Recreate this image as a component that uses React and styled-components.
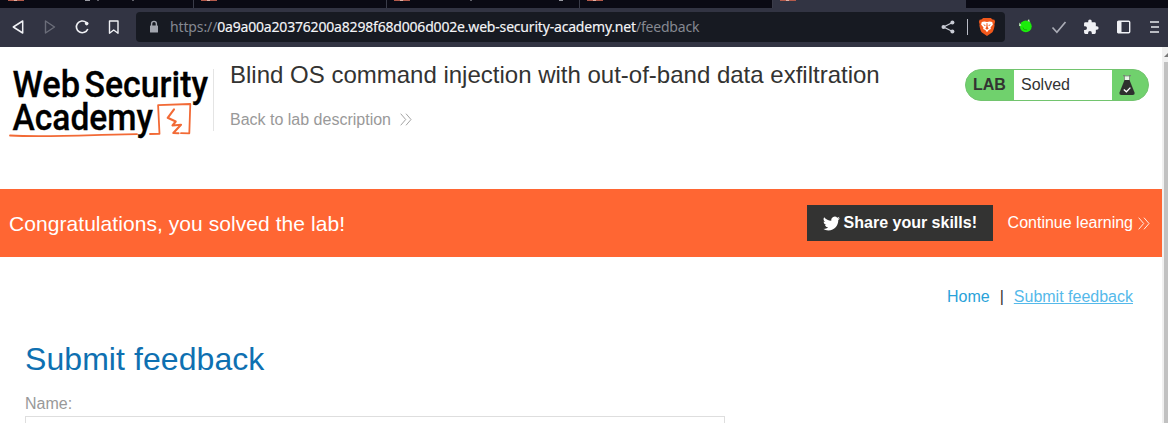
import React from "react";
import styled, { createGlobalStyle } from "styled-components";

const Global = createGlobalStyle`
  * { box-sizing: border-box; }
  body { margin: 0; background: #fff; overflow: hidden; font-family: "Liberation Sans", Arial, sans-serif; }
  a { color: inherit; text-decoration: none; }
`;
const Window = styled.div`width: 1168px; height: 423px; overflow: hidden; display: flex; flex-direction: column;`;
const TabStrip = styled.div`height: 8px; display: flex; padding-left: 1px; background: #0a0a14; flex: none;`;
const Tab = styled.div`
  width: 193px; height: 8px; overflow: hidden;
  background: ${(p) => (p.$active ? "#323443" : "#0a0a14")};
  border-right: 1px solid ${(p) => (p.$active ? "#323443" : "#3a3c49")};
  svg { display: block; }
`;
const Toolbar = styled.div`height: 39px; flex: none; background: #323443; display: flex; align-items: center; padding: 0 5px 1px 11px;`;
const NavButtons = styled.div`display: flex; gap: 14px; width: 125px; svg { display: block; flex: none; }`;
const AddressBar = styled.div`
  width: 869px; height: 30px; border-radius: 4px; background: #171a22; flex: none;
  display: flex; align-items: center; padding: 0 9px 0 12px;
  svg { display: block; flex: none; }
`;
const Url = styled.div`flex: 1; margin-left: 10px; font: 14px/20px "Noto Sans", sans-serif; white-space: nowrap; display: flex;`;
const Part = styled.span`
  letter-spacing: ${(p) => p.$space}px;
  color: ${(p) => (p.$strong ? "#f4f5f8" : "#858891")};
  -webkit-text-stroke: ${(p) => (p.$strong ? "0.15px #f4f5f8" : "0")};
`;
const Divider = styled.i`width: 1px; height: 16px; background: #b9bcc6; margin: 0 10px 0 12px;`;
const Extensions = styled.div`display: flex; flex: 1; gap: 14.500px; align-items: center; padding-left: 12px; svg { display: block; flex: none; }`;
const Viewport = styled.div`display: flex; flex: 1; min-height: 0;`;
const Page = styled.main`width: 1162px; flex: none; overflow: hidden;`;
const Scrollbar = styled.div`width: 6px; background: #f0f0f0; padding: 15px 0 0 2px; position: relative; svg { position: absolute; top: 5px; left: 2px; }`;
const Thumb = styled.div`height: 100%; background: #c1c1c1;`;
const Header = styled.header`height: 142px; display: flex; padding: 12px 13px 0 8px; align-items: flex-start; svg { display: block; }`;
const Logo = styled.svg`flex: none; width: 205px; height: 84px; overflow: visible;`;
const TitleBlock = styled.div`border-left: 1px solid #e4e4e4; height: 62px; margin: 10px 0 0; padding-left: 16px; flex: 1;`;
const Title = styled.h2`margin: -10px 0 0; font-weight: 400; font-size: 24px; line-height: 32px; color: #333332; white-space: nowrap;`;
const Back = styled.a`display: flex; align-items: center; gap: 9px; margin-top: 19px; font-size: 16px; line-height: 20px; color: #999; svg { margin-top: -2px; }`;
const Status = styled.div`
  width: 184px; height: 32px; margin-top: 10px; border-radius: 16px; border: 1px solid #72c46e; background: #70d16d;
  display: flex; align-items: center; color: #333332; font-size: 16px;
`;
const LabName = styled.b`width: 48px; padding-left: 7px;`;
const LabState = styled.span`width: 98px; height: 30px; line-height: 30px; padding-left: 7px; background: #fff;`;
const Flask = styled.svg`margin-left: 7px;`;
const Banner = styled.section`height: 68px; background: #ff6633; color: #fff; display: flex; align-items: center; padding: 0 12px 0 9px;`;
const Message = styled.p`flex: 1; margin: 0; font-size: 21px; letter-spacing: 0.06px; line-height: 28px; padding-top: 2px;`;
const Share = styled.button`
  width: 186px; height: 36px; border: 0; padding: 0 0 0 16px; background: #333332; color: #fff;
  font: bold 16px "Liberation Sans", Arial, sans-serif; display: flex; align-items: center; gap: 4px; white-space: nowrap;
`;
const Continue = styled.a`display: flex; align-items: center; gap: 5px; margin-left: 15px; font-size: 16px; white-space: nowrap;`;
const Links = styled.nav`display: flex; justify-content: flex-end; gap: 10px; padding: 30px 29px 0 0; height: 83px; font-size: 16px; line-height: 20px; color: #333332;`;
const Link = styled.a`&& { color: ${(p) => (p.$current ? "#55b9ea" : "#29a2d9")}; text-decoration: ${(p) => (p.$current ? "underline" : "none")}; }`;
const Form = styled.form`padding-left: 25px;`;
const FormTitle = styled.h1`margin: 0; color: #0e70b1; font-weight: 400; font-size: 32px; letter-spacing: 0.07px; line-height: 38px;`;
const Label = styled.label`display: block; margin-top: 16px; font-size: 16px; line-height: 20px; color: #999;`;
const Field = styled.input`display: block; width: 700px; height: 32px; margin-top: 2px; border: 1px solid #dedede; background: #fff; outline: none;`;

const Chevrons = ({ color }) => (
  <svg width="12" height="13" viewBox="0 0 12 13" fill="none" stroke={color} strokeWidth="1"><path d="M.7.7l5 5.8-5 5.8M6 .7l5 5.8-5 5.8" /></svg>
);
const TabBottom = ({ marks }) => (
  <svg width="192" height="8">
    <path d="M7 0h16v1H7z" fill="#b45a4b" />
    <path d="M13 0h3v1h-3z" fill="#e0b0a4" />
    <path d={marks} fill="none" stroke="#9a9ba3" strokeWidth="1.2" />
  </svg>
);

const tabs = ["M84 .4h5M97 0v1M132 0v1", "", "M84 0v1M172 .4h4", "", null];

export default function App() {
  return (
    <Window>
      <Global />
      <TabStrip>{tabs.map((m, i) => <Tab key={i} $active={m === null}><TabBottom marks={m || ""} /></Tab>)}</TabStrip>
      <Toolbar>
        <NavButtons>
          <svg width="16" height="18" fill="none" stroke="#f0f1f5" strokeWidth="1.5" strokeLinejoin="round"><path d="M11.7 3v12L2.3 9z" /></svg>
          <svg width="20" height="18" fill="none" stroke="#6b6d79" strokeWidth="1.4" strokeLinejoin="round"><path d="M4.5 3v12l9-6z" /></svg>
          <svg width="16" height="18" fill="none" stroke="#f0f1f5" strokeWidth="1.6"><path d="M11.2 4.4A5.9 5.9 0 1 0 12.8 11" /><circle cx="11.7" cy="5.6" r="1.8" fill="#f0f1f5" stroke="none" /></svg>
          <svg width="16" height="18" fill="none" stroke="#f0f1f5" strokeWidth="1.4" strokeLinejoin="round"><path d="M4.5 3H13v12.2L8.7 12l-4.2 3.2z" /></svg>
        </NavButtons>
        <AddressBar>
          <svg width="12" height="14" fill="none" stroke="#a2a5ae" strokeWidth="1.4"><path d="M3.6 6V3.8a2.4 2.4 0 0 1 4.8 0V6" /><rect x="2" y="5.5" width="8" height="7" rx=".6" fill="#a2a5ae" stroke="none" /></svg>
          <Url><Part $space={-0.13}>https://</Part><Part $strong $space={-0.187}>0a9a00a20376200a8298f68d006d002e.web-security-academy.net</Part><Part $space={-0.2}>/feedback</Part></Url>
          <svg width="14" height="14" stroke="#c9ccd5" strokeWidth="1.3" fill="none"><path d="M11.5 2.5L2.6 7l8.9 4.5" /><g fill="#c9ccd5" stroke="none"><circle cx="11.4" cy="2.5" r="2" /><circle cx="2.5" cy="7" r="2" /><circle cx="11.4" cy="11.6" r="2" /></g></svg>
          <Divider />
          <svg width="18" height="18" viewBox="0 0 18 18"><path d="M5.2 0h7.6l1.8 1.5 1.8.2.7 2-.7 2.5.2 1.3c-.6 3-1.2 5.5-2.2 6.7L9 18l-5.4-3.8C2.6 13 2 10.5 1.4 7.5l.2-1.3L.9 3.7l.7-2 1.8-.2z" fill="#f1581b" /><path d="M3.8 4l2.5-.6 2.7.5 2.7-.5 2.5.6.7 2.5-2.4 3 .4 1.6-2.2 1-1.7 2.2-1.7-2.200-2.200-1 .4-1.600-2.400-3z" fill="#fff" /><path d="M5 6.3l2.6.8-.5 1.2zM13 6.3l-2.600.8.5 1.2zM8.600 5h.8l.3 4 1 1.5L9 11.7l-1.700-1.200 1-1.500z" fill="#f1581b" /></svg>
        </AddressBar>
        <Extensions>
          <svg width="18" height="18"><circle cx="8.8" cy="8.3" r="5.9" fill="#1bed0b" /><path d="M2.5 4.5L2 8l2.4-.5zM10.5 3l1.5-2 .8 3z" fill="#c5f6bd" /><path d="M6 9.5l1 2 3 .4" fill="none" stroke="#13b80a" /></svg>
          <svg width="18" height="18" fill="none" stroke="#aaacb6" strokeWidth="1.7"><path d="M2.5 9.5l4.4 4.8L15.5 4" /></svg>
          <svg width="18" height="18" viewBox="-1 0 26 24" fill="#f0f1f5"><path d="M20.5 11H19V7a2 2 0 0 0-2-2h-4V3.5a2.5 2.5 0 0 0-5 0V5H4a2 2 0 0 0-2 2v3.8h1.5a2.7 2.7 0 0 1 0 5.4H2V20a2 2 0 0 0 2 2h3.8v-1.5a2.7 2.7 0 0 1 5.4 0V22H17a2 2 0 0 0 2-2v-4h1.5a2.5 2.5 0 0 0 0-5z" /></svg>
          <svg width="18" height="18"><rect x="2.7" y="3.2" width="12" height="11.5" rx="1" fill="none" stroke="#f0f1f5" strokeWidth="1.4" /><path d="M2.5 3h4v12h-4z" fill="#f0f1f5" /></svg>
          <svg width="14" height="18" stroke="#e6e7ed" strokeWidth="1.5"><path d="M3 4h9M4 9h8M3 14h9" /></svg>
        </Extensions>
      </Toolbar>
      <Viewport>
        <Page>
          <Header>
            <Logo viewBox="8 59 205 84">
              <g fill="#000" stroke="#000" strokeWidth=".3" fontFamily="Roboto, sans-serif" fontWeight="500" fontSize="37">
                <text x="12.5" y="97.3" textLength="67.5" lengthAdjust="spacingAndGlyphs">Web</text>
                <text x="84.500" y="97.3" textLength="123.5" lengthAdjust="spacingAndGlyphs">Security</text>
                <text x="12.5" y="130" textLength="140.5" lengthAdjust="spacingAndGlyphs">Academy</text>
              </g>
              <g fill="none" stroke="#f26a36" strokeLinejoin="round" strokeLinecap="round">
                <path d="M10 135.5c38 2 88-1 127-1.3M150 134l9.5-.2-1.4-28.6 32.2-1.2-1 29.3-8.3-.1" strokeWidth="1.8" />
                <path d="M174 109.3l-6.3 8.5 8 3.7-3.2 4 8.5-.8-7.7 8.3 5.2.2" strokeWidth="2.1" />
              </g>
            </Logo>
            <TitleBlock>
              <Title>Blind OS command injection with out-of-band data exfiltration</Title>
              <Back>Back to lab description <Chevrons color="#a3a3a3" /></Back>
            </TitleBlock>
            <Status>
              <LabName>LAB</LabName><LabState>Solved</LabState>
              <Flask width="16" height="22"><path d="M5.5 2h5v5h-5z" fill="#e9f7e8" stroke="#777" strokeWidth=".7" /><path d="M4 1.7h2M10 1.7h2" stroke="#777" /><path d="M5.5 6h5l5 12.5q.5 2.5-2 2.5h-11q-2.5 0-2-2.5z" fill="#2e302e" /><path d="M4.8 15.5l2.6 2.3 4-4.2" fill="none" stroke="#fff" strokeWidth="1.3" /></Flask>
            </Status>
          </Header>
          <Banner>
            <Message>Congratulations, you solved the lab!</Message>
            <Share type="button">
              <svg width="17" height="17" viewBox="0 0 24 24" fill="#fff"><path d="M23.95 4.57a10 10 0 0 1-2.82.77 4.96 4.96 0 0 0 2.16-2.72 9.9 9.9 0 0 1-3.12 1.18 4.92 4.92 0 0 0-8.38 4.48A13.9 13.9 0 0 1 1.64 3.16a4.92 4.92 0 0 0 1.52 6.57 4.9 4.9 0 0 1-2.23-.61v.06a4.92 4.92 0 0 0 3.95 4.83 5 5 0 0 1-2.21.08 4.94 4.94 0 0 0 4.6 3.42A9.87 9.87 0 0 1 0 19.54a14 14 0 0 0 7.55 2.21c9.05 0 14-7.5 14-13.98l-.02-.64a9.9 9.9 0 0 0 2.42-2.56z" /></svg>
              Share your skills!
            </Share>
            <Continue>Continue learning <Chevrons color="#fff0e8" /></Continue>
          </Banner>
          <Links><Link>Home</Link><span>|</span><Link $current>Submit feedback</Link></Links>
          <Form>
            <FormTitle>Submit feedback</FormTitle>
            <Label htmlFor="name">Name:</Label>
            <Field id="name" />
          </Form>
        </Page>
        <Scrollbar><svg width="4" height="5"><path d="M0 5l4-4v4z" fill="#777" /></svg><Thumb /></Scrollbar>
      </Viewport>
    </Window>
  );
}
